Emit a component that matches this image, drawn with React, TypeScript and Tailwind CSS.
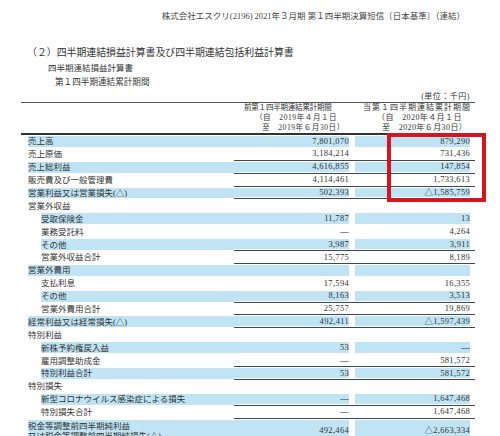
import React from "react";

type Row = { label: string[]; lvl: 0 | 1; a: string; b: string; line?: boolean };

const rows: Row[] = [
  { label: ["売上高"], lvl: 0, a: "7,801,070", b: "879,290" },
  { label: ["売上原価"], lvl: 0, a: "3,184,214", b: "731,436", line: true },
  { label: ["売上総利益"], lvl: 0, a: "4,616,855", b: "147,854", line: true },
  { label: ["販売費及び一般管理費"], lvl: 0, a: "4,114,461", b: "1,733,613", line: true },
  { label: ["営業利益又は営業損失(△)"], lvl: 0, a: "502,393", b: "△1,585,759", line: true },
  { label: ["営業外収益"], lvl: 0, a: "", b: "" },
  { label: ["受取保険金"], lvl: 1, a: "11,787", b: "13" },
  { label: ["業務受託料"], lvl: 1, a: "—", b: "4,264" },
  { label: ["その他"], lvl: 1, a: "3,987", b: "3,911", line: true },
  { label: ["営業外収益合計"], lvl: 1, a: "15,775", b: "8,189", line: true },
  { label: ["営業外費用"], lvl: 0, a: "", b: "" },
  { label: ["支払利息"], lvl: 1, a: "17,594", b: "16,355" },
  { label: ["その他"], lvl: 1, a: "8,163", b: "3,513", line: true },
  { label: ["営業外費用合計"], lvl: 1, a: "25,757", b: "19,869", line: true },
  { label: ["経常利益又は経常損失(△)"], lvl: 0, a: "492,411", b: "△1,597,439", line: true },
  { label: ["特別利益"], lvl: 0, a: "", b: "" },
  { label: ["新株予約権戻入益"], lvl: 1, a: "53", b: "—" },
  { label: ["雇用調整助成金"], lvl: 1, a: "—", b: "581,572", line: true },
  { label: ["特別利益合計"], lvl: 1, a: "53", b: "581,572", line: true },
  { label: ["特別損失"], lvl: 0, a: "", b: "" },
  { label: ["新型コロナウイルス感染症による損失"], lvl: 1, a: "—", b: "1,647,468", line: true },
  { label: ["特別損失合計"], lvl: 1, a: "—", b: "1,647,468", line: true },
  {
    label: ["税金等調整前四半期純利益", "又は税金等調整前四半期純損失(△)"],
    lvl: 0,
    a: "492,464",
    b: "△2,663,334",
  },
];

function TableRow({ r, i }: { r: Row; i: number }) {
  const blue = i % 2 === 0;
  const multi = r.label.length > 1;
  const cellBase = blue
    ? "bg-[#c0e4f4] bg-clip-content py-px"
    : "py-px";
  const h = multi ? "h-[24px]" : "h-[12.9px]";
  const numLine = r.line ? "border-b border-[#3b4754]" : "";
  return (
    <div className={`flex ${h}`}>
      <div
        className={`w-[213px] flex flex-col justify-center ${cellBase} ${
          r.lvl === 0 ? "pl-[7px]" : "pl-[20px]"
        } leading-[10px]`}
      >
        {r.label.map((l, k) => (
          <div key={k} className="whitespace-nowrap">
            {l}
          </div>
        ))}
      </div>
      <div
        className={`w-[121px] flex items-center justify-end pr-[6px] tracking-[0.3px] ${cellBase} ${numLine}`}
      >
        {r.a}
      </div>
      <div
        className={`w-[120px] flex items-center justify-end pr-[5px] tracking-[0.3px] ${cellBase} ${numLine}`}
      >
        {r.b}
      </div>
    </div>
  );
}

export default function App() {
  return (
    <div
      className="relative w-[500px] h-[436px] overflow-hidden bg-white text-[#333]"
      style={{ fontFamily: '"Liberation Serif", "Noto Sans CJK JP", serif' }}
    >
      <div className="pt-[10px] pr-[35px] h-[22px] text-right text-[8.5px] leading-[12px] text-[#444] whitespace-nowrap">
        株式会社エスクリ(2196) 2021年３月期 第１四半期決算短信〔日本基準〕（連結）
      </div>
      <div className="mt-[24px] pl-[27px] h-[14px] text-[9.9px] leading-[14px] whitespace-nowrap">
        （２）四半期連結損益計算書及び四半期連結包括利益計算書
      </div>
      <div className="mt-[2px] pl-[48px] h-[12px] text-[8.5px] leading-[12px]">
        四半期連結損益計算書
      </div>
      <div className="mt-[2px] pl-[55px] h-[12px] text-[8.6px] leading-[12px]">
        第１四半期連結累計期間
      </div>
      <div className="ml-[21px] w-[454px] mt-[4px] text-[8.5px]">
        <div className="h-[10px] leading-[10px] text-right pr-[5px] text-[8px] tracking-[0.5px]">
          (単位：千円)
        </div>
        <div className="flex border-t border-[#555] border-b-2 border-b-[#333] h-[33px]">
          <div className="w-[213px]" />
          <div className="w-[121px] text-[7.5px] leading-[10px] whitespace-nowrap">
            <div className="pl-[10px] tracking-[-0.2px]">前第１四半期連結累計期間</div>
            <div className="pl-[21px] tracking-[0.6px]">（自　2019年４月１日</div>
            <div className="pl-[28px] tracking-[0.6px]">至　2019年６月30日）</div>
          </div>
          <div className="w-[120px] text-[8px] leading-[10px] whitespace-nowrap">
            <div className="pl-[8px] tracking-[1px]">当第１四半期連結累計期間</div>
            <div className="pl-[22px] tracking-[0.4px]">（自　2020年４月１日</div>
            <div className="pl-[27px] tracking-[0.4px]">至　2020年６月30日）</div>
          </div>
        </div>
        {rows.map((r, i) => (
          <TableRow key={i} r={r} i={i} />
        ))}
      </div>
      <div className="absolute left-[387px] top-[133px] w-[99px] h-[69px] border-[4px] border-[#d4161f]" />
    </div>
  );
}
